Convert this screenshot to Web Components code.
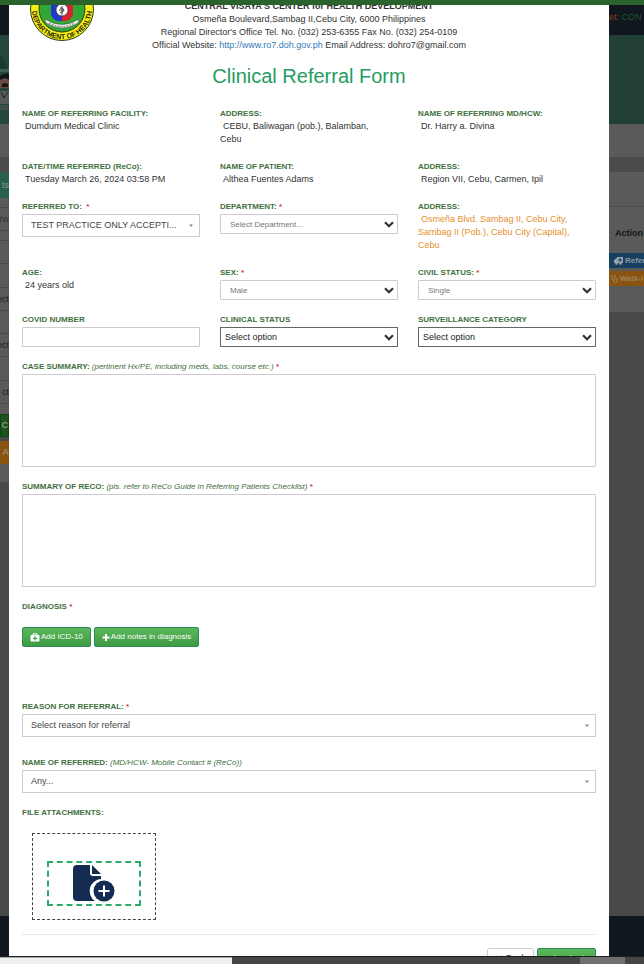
<!DOCTYPE html>
<html lang="en">
<head>
<meta charset="utf-8">
<title>Clinical Referral Form</title>
<style>
body{margin:0;font:9px/13px "Liberation Sans",Arial,sans-serif;color:#333;background:#4a4a4a}
</style>
</head>
<body>
<referral-page></referral-page>

<script>
const define=(name,html,setup)=>customElements.define(name,class extends HTMLElement{
  constructor(){super();this.attachShadow({mode:'open'})}
  connectedCallback(){
    this.shadowRoot.innerHTML=typeof html==='function'?html(this):html;
    if(setup)setup(this);
  }
});

/* round agency seal */
define('agency-seal',`<style>:host{display:block;width:64px;height:64px}svg{display:block}</style>
<svg width="64" height="64" viewBox="0 0 64 64" role="img" aria-label="Department of Health seal">
<circle cx="32" cy="32" r="31.5" fill="#f6ee12" stroke="#2c3a10"/>
<circle cx="32" cy="32" r="23" fill="#2fa836" stroke="#333a10"/>
<path d="M21 22h11v22h-4q-7-2-7-8z" fill="#2438c8"/><path d="M32 22h11v14q0 6-7 8h-4z" fill="#d8222c"/>
<circle cx="32" cy="33" r="6" fill="#fff" stroke="#333" stroke-width=".7"/>
<path d="M32 29v9M30 31q4 0 4 2t-4 3M29 33h5" fill="none" stroke="#444" stroke-width="1"/>
<path d="M15 42q17 11 34 0l-1 4q-16 10-32 0z" fill="#f4f4ee" stroke="#555" stroke-width=".6"/>
<path d="M19 46q13 7 26 0" fill="none" stroke="#8a8a8a" stroke-width="1.2" stroke-dasharray="2 1"/>
<path id="arc" d="M2 32A30 30 0 0 0 32 62A30 30 0 0 0 62 32" fill="none"/>
<text font-family="Liberation Sans,Arial,sans-serif" font-size="7" font-weight="700" fill="#2a2a08" text-anchor="middle"><textPath href="#arc" startOffset="50%">DEPARTMENT OF HEALTH</textPath></text>
</svg>`);

define('agency-header',`<style>
:host{display:grid;grid-template-columns:72px 1fr 72px;justify-items:center}
agency-seal{justify-self:end}
address{font-style:normal;text-align:center;color:#333;padding-top:23px;white-space:nowrap}
strong,span{display:block}a{color:#337ab7;text-decoration:none}
</style><agency-seal></agency-seal>
<address><strong>CENTRAL VISAYA'S CENTER for HEALTH DEVELOPMENT</strong>
<span>Osmeña Boulevard,Sambag II,Cebu City, 6000 Philippines</span>
<span>Regional Director's Office Tel. No. (032) 253-6355 Fax No. (032) 254-0109</span>
<span>Official Website: <a href="http://www.ro7.doh.gov.ph">http://www.ro7.doh.gov.ph</a> Email Address: dohro7@gmail.com</span></address>`);

const labelCss=`
:host{display:block;min-width:0}
label,.label{display:block;font-size:8px;line-height:12px;font-weight:700;color:#3f7040;white-space:pre}
i{font-weight:400}b{color:#d33}`;
const labelText=el=>`${el.getAttribute('label')}${el.hasAttribute('hint')?` <i>${el.getAttribute('hint')}</i>`:''}${el.hasAttribute('required')?' <b>*</b>':''}`;

/* read-only labelled value */
define('info-field',el=>`<style>${labelCss}
.value{color:#333;text-indent:3px;padding-right:20px}:host([tone=warm]) .value{color:#e8902c}</style>
<div class="label">${labelText(el)}</div><div class="value"><slot></slot></div>`);

/* labelled input, text area or drop-down */
const arrows={
 chevron:'<svg width="10" height="7" viewBox="0 0 10 7"><path d="M1 1.3l4 4 4-4" fill="none" stroke="#333" stroke-width="2.2"/></svg>',
 caret:'<svg width="10" height="7" viewBox="0 0 10 7"><path d="M3 2.5h4L5 5z" fill="#888"/></svg>'
};
define('form-field',el=>{
  const kind=el.getAttribute('kind')||'text',look=el.getAttribute('look')||'';
  const control=kind==='area'?'<textarea id="c"></textarea>':kind==='text'?'<input id="c" type="text">':
   `<select id="c"><option>${el.getAttribute('value')}</option></select>${arrows[look==='search'?'caret':'chevron']}`;
  return `<style>${labelCss}
.box{display:grid;margin-top:1px}
.box>*{grid-area:1/1}
input,textarea,select{box-sizing:border-box;width:100%;margin:0;font:inherit;border:1px solid #ccc;border-radius:1px;background:#fff;color:#333;height:20px;padding:0 4px;appearance:none}
textarea{height:93px;resize:none;display:block}
:host([look=soft]) select{font-size:8px;color:#777;padding-left:9px}
:host([look=plain]) select{border-color:#666;border-radius:0;color:#222}
:host([look=search]) select{height:23px;padding-left:8px;border-radius:0;color:#444}
svg{place-self:center end;margin-right:4px;pointer-events:none}
</style><label for="c">${labelText(el)}</label><div class="box">${control}</div>`;
});

const icons={
 kit:'<svg width="10" height="9" viewBox="0 0 10 9"><path d="M3 2V.8h4V2" fill="none" stroke="#fff"/><rect x=".5" y="2" width="9" height="6.5" rx="1" fill="#fff"/><path d="M5 3.3v4M3 5.3h4" stroke="#43a047" stroke-width="1.2"/></svg>',
 plus:'<svg width="8" height="9" viewBox="0 0 8 9"><path d="M4 1v7M.5 4.5h7" stroke="#fff" stroke-width="2"/></svg>',
 close:'<svg width="8" height="9" viewBox="0 0 8 9"><path d="M1.5 2l5 5m0-5l-5 5" stroke="#444" stroke-width="1.4"/></svg>',
 send:'<svg width="10" height="9" viewBox="0 0 10 9"><path d="M9.5 0L8 8 5 7 3.5 9V6.3L0 5z" fill="#fff"/></svg>'
};
define('action-button',el=>`<style>
:host{display:block}
button{display:flex;align-items:center;justify-content:center;gap:1px;width:100%;height:20px;padding:0 7px;margin:0;font:400 8px/12px "Liberation Sans",Arial,sans-serif;color:#fff;background:linear-gradient(#5cb85c,#3c9a40);border:1px solid #2e8b57;border-radius:2px;white-space:nowrap}
:host([plain]) button{background:#fff;color:#333;border-color:#ccc;font-size:9px;gap:3px}
:host([large]) button{font-size:9px;gap:3px;height:22px;padding:0 8px}
</style><button type="button">${icons[el.getAttribute('icon')]}<slot></slot></button>`);

define('file-drop',`<style>
:host{display:block}
.label{font-size:8px;line-height:12px;font-weight:700;color:#3f7040}
.outer{box-sizing:border-box;width:124px;height:87px;margin:14px 0 0 10px;border:1px dashed #444;padding:27px 14px 13px}
button{box-sizing:border-box;width:100%;height:45px;padding:0;display:grid;place-items:center;background:#fff;border:2px dashed #2eaa70}
svg{display:block}
</style><div class="label">FILE ATTACHMENTS:</div>
<div class="outer"><button type="button" aria-label="Add file"><svg width="42" height="37" viewBox="0 0 42 37">
<path d="M4 0h13v8q0 3 3 3h8v3a12 12 0 0 0-6 22H4q-4 0-4-4V4q0-4 4-4z" fill="#152c52"/><path d="M19 0l9 9h-9z" fill="#152c52"/>
<circle cx="31" cy="26" r="10.5" fill="#152c52"/><path d="M31 20.5v11M25.5 26h11" stroke="#fff" stroke-width="2"/></svg></button></div>`);

/* dimmed slices of the page that lies behind the dialog */
define('backdrop-left',`<style>
:host{display:flex;flex-direction:column;overflow:hidden;background:#494949;color:#1c1c1c;text-align:right;white-space:nowrap}
div{flex:none;overflow:hidden;box-sizing:border-box;display:flex;justify-content:flex-end;align-items:center}
.nav{height:30px;background:#10171f}.hero{height:89px;background:#24483e}.band{height:33px;background:#5a5a5a}.gap{height:15px;background:#4b4b4b}
.teal{height:26px;background:#28604a;color:#8a9a92}
.row{height:23px;background:#5a5a5a;border-bottom:1px solid #494949}.dim{color:#333}
.go{height:23px;background:#1a561c;color:#8a9a8a;border:1px solid #164016;font-weight:700}
.warn{height:23px;margin:4px 0 0;background:#8a5410;color:#9a8a70;font-weight:700}
.end{height:18px;background:#5a5a5a}.sp{height:10px;background:#5a5a5a}.short{height:10px}.tall{height:24px}
.foot{height:40px;background:#10171f;margin-top:auto}
</style>
<div class="nav"></div><div class="hero"><svg width="9" height="89" viewBox="0 0 9 89"><path d="M0 20q7 5 8 18l-3-4-5 3z" fill="#193b32"/><path d="M0 34h9v3H0z" fill="#3c6258"/><path d="M0 41q6-4 9-2v6l-4-2-5 2z" fill="#141414"/><path d="M0 45l5-2 4 2v8H0z" fill="#6b4a40"/><path d="M2 49q3-2 6 0v3H2z" fill="#181818"/><path d="M0 56h9v13H0z" fill="#555b58"/><path d="M1 57l3 6 4-6" fill="none" stroke="#222"/><path d="M0 70h9v5H0z" fill="#394f48"/></svg></div>
<div class="band"></div><div class="gap"></div><div class="teal">ts</div>
<div class="row short"></div><div class="row dim">rw</div><div class="row short"></div><div class="row"></div><div class="row tall"></div>
<div class="row">ect</div><div class="row"></div><div class="row">ect</div><div class="row tall"></div><div class="row">ct</div><div class="sp"></div>
<div class="go">C</div><div class="warn">A</div><div class="end"></div><div class="foot"></div>`);

define('backdrop-right',`<style>
:host{display:flex;flex-direction:column;overflow:hidden;background:#494949;color:#151515;white-space:nowrap}
div{flex:none;overflow:hidden;box-sizing:border-box;display:flex;align-items:center}
.nav{height:30px;background:#10171f;color:#1d5a2c;padding-bottom:6px}.nav b{font-weight:400;color:#8c3c16}
.hero{height:89px;background:#223f36}.band{height:33px;background:#5a5a5a}.gap{height:15px;background:#4b4b4b}
.top{height:35px;background:#5a5a5a;border-bottom:1px solid #4e4e4e}.head{height:46px;background:#5a5a5a;padding:6px 0 0 6px;font-weight:700}
.btn{height:15px;gap:2px;padding-left:5px;font:700 8px/12px "Liberation Sans",Arial,sans-serif}
.blue{background:#173f60;color:#8a98a4}.warm{background:#8a5410;color:#9b835e;padding-left:2px}
.line{height:3px;background:#5a5a5a}.end{height:26px;background:#5a5a5a}.foot{height:40px;background:#10171f;margin-top:auto}
svg{flex:none}
</style>
<div class="nav"><b>et:</b>&nbsp;CON</div><div class="hero"></div><div class="band"></div><div class="gap"></div><div class="top"></div>
<div class="head">Action</div>
<div class="btn blue"><svg width="9" height="8" viewBox="0 0 9 8"><path d="M3 0h6v6H0V3l3-2z" fill="#94a2ae"/><circle cx="2.5" cy="6.5" r="1.3" fill="#94a2ae"/><circle cx="6.5" cy="6.5" r="1.3" fill="#94a2ae"/><path d="M6 1v4M4 3h4" stroke="#173f60"/></svg>Refer</div>
<div class="line"></div>
<div class="btn warm"><svg width="7" height="8" viewBox="0 0 7 8"><path d="M1 0v3q0 2 1.5 2T4 3V0M2.5 5q0 2.5 2 2.500T6 5V3" fill="none" stroke="#9b835e"/></svg>Walk-I</div>
<div class="end"></div><div class="foot"></div>`);

define('referral-form',`<style>
:host{display:block;background:#fff;overflow:hidden;padding:0 13px}
agency-header{margin-top:-28px}
h1{margin:12px 0 20px;font-size:20px;line-height:24px;font-weight:400;text-align:center;color:#259c62}
form{display:grid;gap:14px}
.row{display:grid;grid-template-columns:repeat(3,minmax(0,1fr));gap:20px;padding-bottom:1px}
.last{padding-bottom:0}
.label{font-size:8px;line-height:12px;font-weight:700;color:#3f7040}.label b{color:#d33}
.buttons{display:flex;gap:3px;padding-bottom:40px}
.name{margin-top:6px}
footer{display:flex;justify-content:flex-end;gap:3px;border-top:1px solid #e8e8e8;padding-top:13px}
</style>
<agency-header></agency-header><h1>Clinical Referral Form</h1>
<form>
<div class="row"><info-field label="NAME OF REFERRING FACILITY:">Dumdum Medical Clinic</info-field><info-field label="ADDRESS:">CEBU, Baliwagan (pob.), Balamban, Cebu</info-field><info-field label="NAME OF REFERRING MD/HCW:">Dr. Harry a. Divina</info-field></div>
<div class="row"><info-field label="DATE/TIME REFERRED (ReCo):">Tuesday March 26, 2024 03:58 PM</info-field><info-field label="NAME OF PATIENT:">Althea Fuentes Adams</info-field><info-field label="ADDRESS:">Region VII, Cebu, Carmen, Ipil</info-field></div>
<div class="row"><form-field label="REFERRED TO: " required kind="select" look="search" value="TEST PRACTICE ONLY ACCEPTI..."></form-field><form-field label="DEPARTMENT:" required kind="select" look="soft" value="Select Department..."></form-field><info-field tone="warm" label="ADDRESS:">Osmeña Blvd. Sambag II, Cebu City, Sambag II (Pob.), Cebu City (Capital), Cebu</info-field></div>
<div class="row last"><info-field label="AGE:">24 years old</info-field><form-field label="SEX:" required kind="select" look="soft" value="Male"></form-field><form-field label="CIVIL STATUS:" required kind="select" look="soft" value="Single"></form-field></div>
<div class="row last"><form-field label="COVID NUMBER"></form-field><form-field label="CLINICAL STATUS" kind="select" look="plain" value="Select option"></form-field><form-field label="SURVEILLANCE CATEGORY" kind="select" look="plain" value="Select option"></form-field></div>
<form-field kind="area" label="CASE SUMMARY:" hint="(pertinent Hx/PE, including meds, labs, course etc.)" required></form-field>
<form-field kind="area" label="SUMMARY OF RECO:" hint="(pls. refer to ReCo Guide in Referring Patients Checklist)" required></form-field>
<div class="label">DIAGNOSIS <b>*</b></div>
<div class="buttons"><action-button icon="kit">Add ICD-10</action-button><action-button icon="plus">Add notes in diagnosis</action-button></div>
<form-field kind="select" look="search" label="REASON FOR REFERRAL:" required value="Select reason for referral"></form-field>
<form-field class="name" kind="select" look="search" label="NAME OF REFERRED:" hint="(MD/HCW- Mobile Contact # (ReCo))" value="Any..."></form-field>
<file-drop></file-drop>
<footer><action-button plain icon="close">Back</action-button><action-button large icon="send">Submit</action-button></footer>
</form>`);

define('bottom-bar',`<style>
:host{display:flex;border-top:1px solid #1c1c1c;background:#454545}
.status{flex:0 0 36%;background:#f0f0f0;border-top:1px solid #aaa}
.rest{flex:1}.thumb{flex:0 0 7%;background:#707070}.end{flex:0 0 3%}
</style><div class="status"></div><div class="rest"></div><div class="thumb"></div><div class="end"></div>`);

define('referral-page',`<style>
:host{display:grid;grid-template:5px minmax(0,1fr) 8px/9px minmax(0,1fr) 35px;height:100vh;overflow:hidden}
.top{grid-column:1/-1;background:#2a632c}
bottom-bar{grid-column:1/-1}
</style><div class="top"></div><backdrop-left></backdrop-left><referral-form></referral-form><backdrop-right></backdrop-right><bottom-bar></bottom-bar>`);
</script>
</body>
</html>
